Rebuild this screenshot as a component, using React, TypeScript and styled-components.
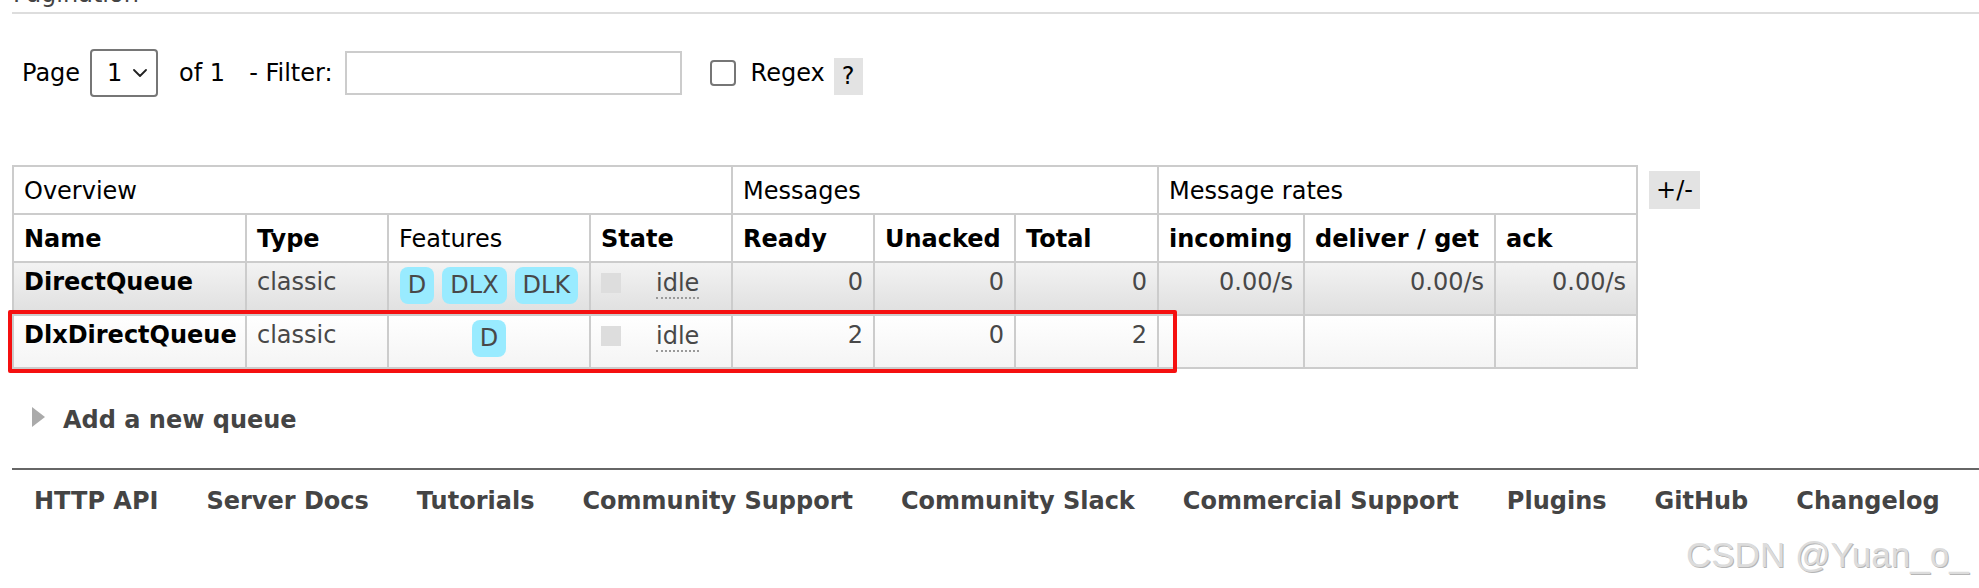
import React from 'react';
import styled, { createGlobalStyle } from 'styled-components';

const Global = createGlobalStyle`
  html, body { margin: 0; padding: 0; background: #fff; overflow: hidden; }
  body {
    font-family: "DejaVu Sans", Verdana, sans-serif;
    font-size: 24px;
    color: #000;
    width: 1979px;
    height: 588px;
  }
`;

const Page = styled.div`
  display: flow-root;
  position: relative;
  height: 588px;
  padding-left: 12px;
  box-sizing: border-box;
`;

const SectionTitle = styled.h3`
  margin: -18px 0 0;
  padding: 0 0 6px 1px;
  font-size: 24px;
  font-weight: normal;
  line-height: 24px;
  color: #444;
  border-bottom: 2px solid #ddd;
`;

const Toolbar = styled.div`
  display: flex;
  align-items: center;
  height: 48px;
  margin-top: 35px;
  padding-left: 10px;
`;

const Label = styled.span<{ $ml?: number }>`
  margin-left: ${p => p.$ml ?? 0}px;
  line-height: 28px;
  white-space: nowrap;
`;

const SelectBox = styled.div<{ $ml?: number }>`
  display: flex;
  align-items: center;
  box-sizing: border-box;
  width: 68px;
  height: 48px;
  margin-left: ${p => p.$ml ?? 0}px;
  padding: 0 9px 0 15px;
  border: 2px solid #767676;
  border-radius: 4px;
  svg { margin-left: auto; }
`;

const FilterInput = styled.input<{ $ml?: number }>`
  box-sizing: border-box;
  width: 337px;
  height: 44px;
  margin: 0 0 0 ${p => p.$ml ?? 0}px;
  border: 2px solid #ccc;
  border-radius: 0;
  font: inherit;
  outline: none;
`;

const Check = styled.input<{ $ml?: number }>`
  appearance: none;
  box-sizing: border-box;
  width: 26px;
  height: 26px;
  margin: 0 0 0 ${p => p.$ml ?? 0}px;
  border: 2px solid #767676;
  border-radius: 4px;
  background: #fff;
`;

const Help = styled.span<{ $ml?: number }>`
  display: inline-flex;
  align-items: center;
  justify-content: center;
  width: 29px;
  height: 37px;
  margin: 6px 0 0 ${p => p.$ml ?? 0}px;
  background: #e3e3e3;
  line-height: 28px;
`;

const TableArea = styled.div`
  position: relative;
  display: flex;
  align-items: flex-start;
  margin-top: 68px;
`;

const Table = styled.table`
  border-collapse: collapse;
  table-layout: fixed;
  width: 1624px;
  border: 2px solid #ccc;
`;

const GroupTh = styled.th`
  padding: 10px 10px 8px;
  border: 2px solid #ccc;
  font-weight: normal;
  text-align: left;
  line-height: 28px;
  background: #fff;
`;

const ColTh = styled.th<{ $plain?: boolean }>`
  padding: 10px 10px 8px;
  border: 2px solid #ccc;
  font-weight: ${p => (p.$plain ? 'normal' : 'bold')};
  text-align: left;
  line-height: 28px;
  white-space: nowrap;
  background: #fff;
`;

const Row = styled.tr<{ $alt: 1 | 2 }>`
  background: ${p =>
    p.$alt === 1
      ? 'linear-gradient(to bottom, #f3f3f3 0%, #dfdfdf 100%)'
      : 'linear-gradient(to bottom, #ffffff 0%, #f4f4f4 100%)'};
`;

const Cell = styled.td<{ $align?: 'left' | 'right' | 'center'; $strong?: boolean }>`
  padding: 4px 10px 10px;
  border: 2px solid #ccc;
  vertical-align: top;
  line-height: 31px;
  text-align: ${p => p.$align ?? 'left'};
  color: ${p => (p.$strong ? '#000' : '#484848')};
  font-weight: ${p => (p.$strong ? 'bold' : 'normal')};
  white-space: nowrap;
`;

const Badges = styled.div`
  display: flex;
  justify-content: center;
  gap: 8px;
`;

const Badge = styled.span`
  display: block;
  height: 37px;
  padding: 0 8px;
  line-height: 37px;
  border-radius: 8px;
  background: #99ebff;
  color: #484848;
`;

const StateWrap = styled.div`
  display: flex;
  align-items: flex-start;
`;

const StateDot = styled.span`
  width: 20px;
  height: 20px;
  margin-top: 6px;
  background: #ddd;
`;

const StateText = styled.abbr`
  margin: 2px 0 0 35px;
  line-height: 28px;
  text-decoration: none;
  border-bottom: 2px dotted #999;
`;

const ToggleButton = styled.span`
  margin: 6px 0 0 11px;
  height: 38px;
  padding: 0 7px;
  line-height: 38px;
  background: #e3e3e3;
`;

const Annotation = styled.div`
  position: absolute;
  left: -4px;
  top: 145px;
  width: 1169px;
  height: 63px;
  box-sizing: border-box;
  border: 4px solid #f51010;
  border-radius: 2px;
  pointer-events: none;
`;

const Collapsible = styled.div`
  display: flex;
  align-items: flex-start;
  margin-top: 37px;
  padding-left: 20px;
  color: #444;
  font-weight: bold;
  line-height: 28px;
`;

const Arrow = styled.span`
  width: 0;
  height: 0;
  margin: 1px 18px 0 0;
  border-left: 13px solid #aaa;
  border-top: 10px solid transparent;
  border-bottom: 10px solid transparent;
`;

const Footer = styled.div`
  display: flex;
  gap: 48px;
  margin-top: 34px;
  padding: 17px 0 0 22px;
  border-top: 2px solid #666;
`;

const FooterLink = styled.a`
  color: #444;
  font-weight: bold;
  line-height: 28px;
  text-decoration: none;
  white-space: nowrap;
`;

const Watermark = styled.div`
  position: absolute;
  left: 1686px;
  top: 535px;
  font-family: "Liberation Sans", Arial, sans-serif;
  font-size: 35px;
  line-height: 40px;
  color: #dcdcdc;
  text-shadow: 1px 1px 0 #b5b5b5;
  white-space: nowrap;
`;

const Chevron = () => (
  <svg width="14" height="8" viewBox="0 0 14 8" fill="none">
    <path d="M1 1 L7 7 L13 1" stroke="#222" strokeWidth="1.8" strokeLinecap="round" strokeLinejoin="round" />
  </svg>
);

const colWidths = [233, 142, 202, 142, 142, 141, 143, 146, 191, 142];

type Q = {
  name: string;
  features: string[];
  ready: string;
  unacked: string;
  total: string;
  rates: string[];
  alt: 1 | 2;
};

const queues: Q[] = [
  { name: 'DirectQueue', features: ['D', 'DLX', 'DLK'], ready: '0', unacked: '0', total: '0', rates: ['0.00/s', '0.00/s', '0.00/s'], alt: 1 },
  { name: 'DlxDirectQueue', features: ['D'], ready: '2', unacked: '0', total: '2', rates: ['', '', ''], alt: 2 },
];

const links = ['HTTP API', 'Server Docs', 'Tutorials', 'Community Support', 'Community Slack', 'Commercial Support', 'Plugins', 'GitHub', 'Changelog'];

export default function App() {
  return (
    <>
      <Global />
      <Page>
        <SectionTitle>Pagination</SectionTitle>
        <Toolbar>
          <Label>Page</Label>
          <SelectBox $ml={10}>
            <span>1</span>
            <Chevron />
          </SelectBox>
          <Label $ml={21}>of 1</Label>
          <Label $ml={24}>- Filter:</Label>
          <FilterInput $ml={12} type="text" />
          <Check $ml={28} type="checkbox" />
          <Label $ml={15}>Regex</Label>
          <Help $ml={9}>?</Help>
        </Toolbar>

        <TableArea>
          <Table>
            <colgroup>
              {colWidths.map((w, i) => (
                <col key={i} style={{ width: w }} />
              ))}
            </colgroup>
            <thead>
              <tr>
                <GroupTh colSpan={4}>Overview</GroupTh>
                <GroupTh colSpan={3}>Messages</GroupTh>
                <GroupTh colSpan={3}>Message rates</GroupTh>
              </tr>
              <tr>
                <ColTh>Name</ColTh>
                <ColTh>Type</ColTh>
                <ColTh $plain>Features</ColTh>
                <ColTh>State</ColTh>
                <ColTh>Ready</ColTh>
                <ColTh>Unacked</ColTh>
                <ColTh>Total</ColTh>
                <ColTh>incoming</ColTh>
                <ColTh>deliver / get</ColTh>
                <ColTh>ack</ColTh>
              </tr>
            </thead>
            <tbody>
              {queues.map(q => (
                <Row key={q.name} $alt={q.alt}>
                  <Cell $strong>{q.name}</Cell>
                  <Cell>classic</Cell>
                  <Cell $align="center">
                    <Badges>
                      {q.features.map(f => (
                        <Badge key={f}>{f}</Badge>
                      ))}
                    </Badges>
                  </Cell>
                  <Cell>
                    <StateWrap>
                      <StateDot />
                      <StateText title="idle">idle</StateText>
                    </StateWrap>
                  </Cell>
                  <Cell $align="right">{q.ready}</Cell>
                  <Cell $align="right">{q.unacked}</Cell>
                  <Cell $align="right">{q.total}</Cell>
                  {q.rates.map((r, i) => (
                    <Cell key={i} $align="right">{r}</Cell>
                  ))}
                </Row>
              ))}
            </tbody>
          </Table>
          <ToggleButton>+/-</ToggleButton>
          <Annotation />
        </TableArea>

        <Collapsible>
          <Arrow />
          <span>Add a new queue</span>
        </Collapsible>

        <Footer>
          {links.map(l => (
            <FooterLink key={l} href="#">{l}</FooterLink>
          ))}
        </Footer>

        <Watermark>CSDN @Yuan_o_</Watermark>
      </Page>
    </>
  );
}
